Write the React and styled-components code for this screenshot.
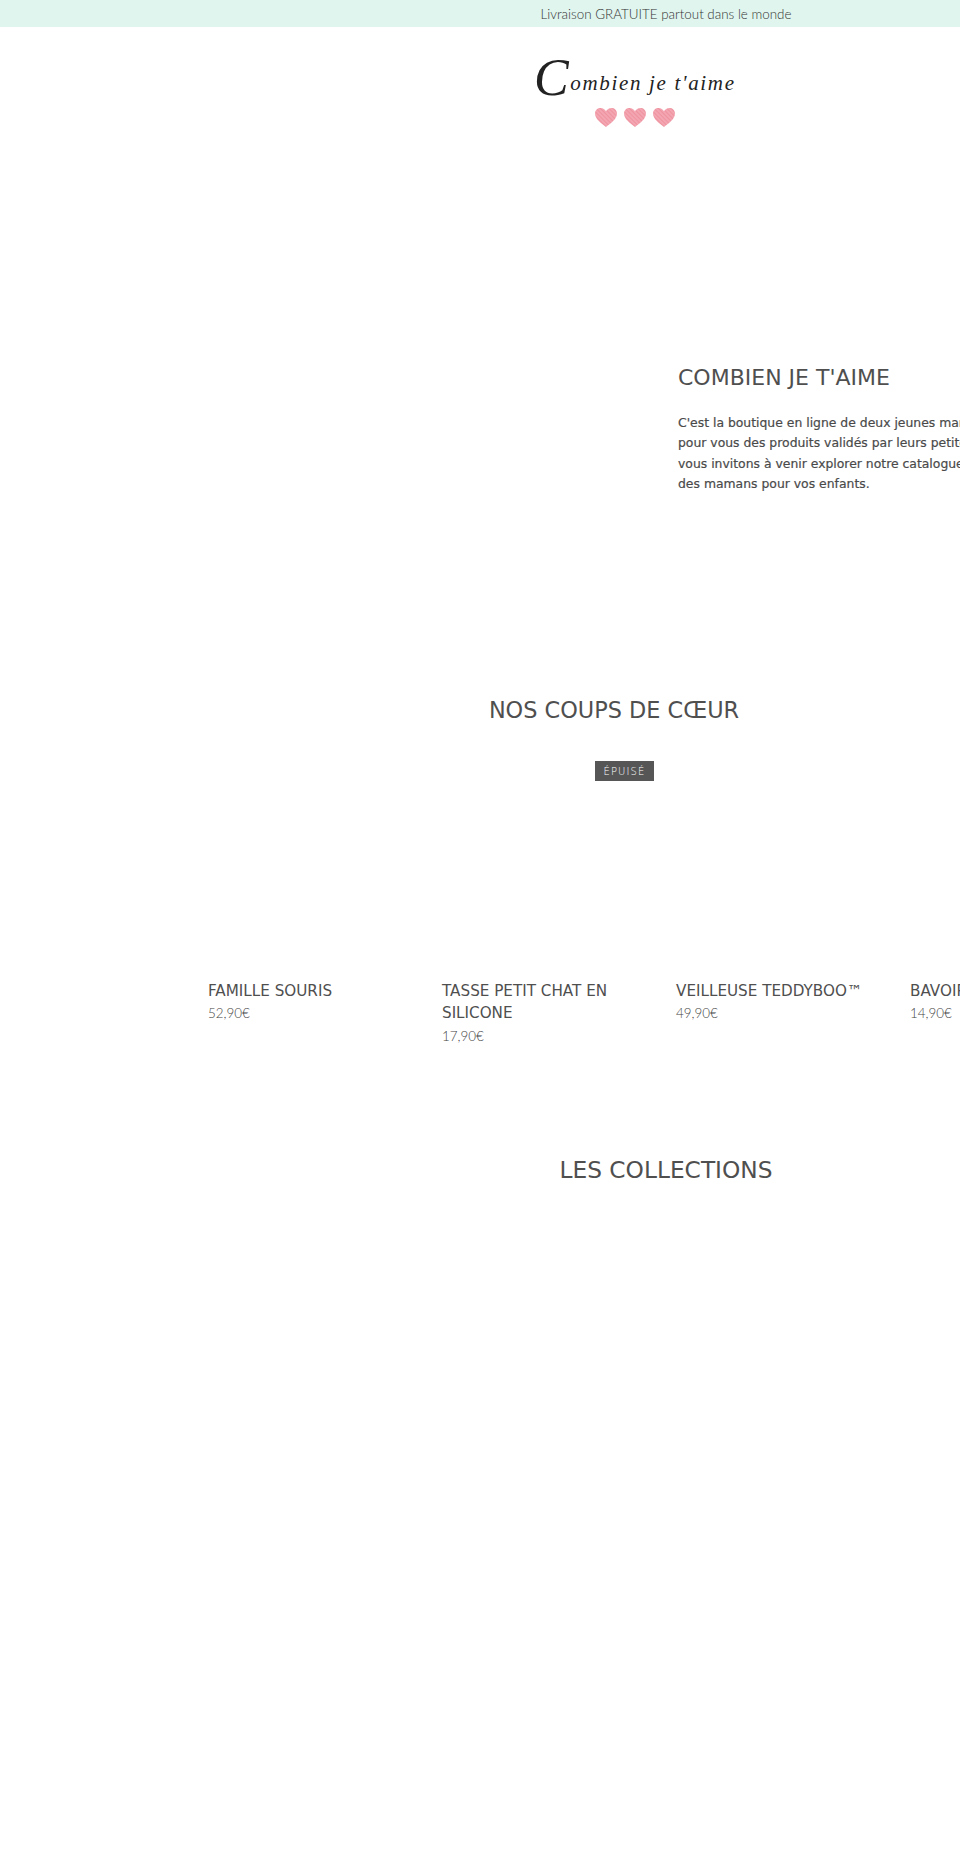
import React from 'react';
import styled, { createGlobalStyle } from 'styled-components';

const GlobalStyle = createGlobalStyle`
  html, body {
    margin: 0;
    width: 960px;
    height: 1875px;
    overflow: hidden;
    background: #fff;
  }
  body {
    font-family: "DejaVu Sans", Verdana, sans-serif;
    color: #4f4f4f;
  }
`;

const Page = styled.div`
  width: 1332px;
  min-height: 1875px;
`;

const AnnouncementBar = styled.div`
  height: 27px;
  background: #dff5ed;
  display: flex;
  align-items: center;
  justify-content: center;
  font-family: Lato, sans-serif;
  font-size: 13.4px;
  font-weight: 300;
  color: #333;
`;

const LogoHeader = styled.header`
  padding: 32px 0 0 534px;
  height: 336px;
  box-sizing: border-box;
`;

const LogoImage = styled.svg`
  display: block;
  width: 204px;
  height: 72px;
`;

const Hero = styled.section`
  padding-left: 678px;
  height: 332px;
`;

const HeroTitle = styled.h2`
  margin: 0 0 21px;
  font-size: 22px;
  line-height: 29px;
  font-weight: 400;
  color: #4f4f4f;
`;

const HeroText = styled.p`
  margin: 0;
  width: 640px;
  font-size: 12.4px;
  line-height: 20.3px;
  font-weight: 400;
  color: #4a4a4a;
  white-space: nowrap;
  -webkit-text-stroke: 0.2px #4a4a4a;
`;

const SectionTitle = styled.h2`
  margin: 0;
  width: ${({ $width }) => $width}px;
  text-align: center;
  font-size: ${({ $size }) => $size}px;
  line-height: 30px;
  font-weight: 400;
  color: #4f4f4f;
`;

const ProductRow = styled.div`
  display: grid;
  grid-template-columns: repeat(4, 212px);
  column-gap: 22px;
  padding: 36px 0 0 208px;
  height: 430px;
  box-sizing: border-box;
`;

const ProductCard = styled.article`
  display: flex;
  flex-direction: column;
`;

const ProductImage = styled.div`
  position: relative;
  height: 219px;
  background: #fff;
`;

const SoldOutBadge = styled.span`
  position: absolute;
  top: 0;
  right: 0;
  width: 59px;
  height: 20px;
  display: flex;
  align-items: center;
  justify-content: center;
  background: #565656;
  color: #fff;
  font-size: 10px;
  font-weight: 200;
  letter-spacing: 1.1px;
`;

const ProductTitle = styled.h3`
  margin: 0;
  font-size: 15.2px;
  line-height: 22.4px;
  font-weight: 400;
  color: #4f4f4f;
`;

const ProductPrice = styled.div`
  font-family: Lato, sans-serif;
  font-size: 13.4px;
  line-height: 22.4px;
  font-weight: 300;
  color: #444;
`;

const products = [
  { name: 'FAMILLE SOURIS', price: '52,90€' },
  { name: 'TASSE PETIT CHAT EN SILICONE', price: '17,90€', soldOut: true },
  { name: 'VEILLEUSE TEDDYBOO™', price: '49,90€' },
  { name: 'BAVOIR EN SILICONE', price: '14,90€' },
];

const HEART = 'M11 19 C6 15 0 11 0 5.5 C0 2 2.6 0 5.5 0 C8 0 10 1.4 11 3.2 C12 1.4 14 0 16.5 0 C19.4 0 22 2 22 5.5 C22 11 16 15 11 19 Z';

function Logo() {
  return (
    <LogoImage viewBox="0 0 204 72" aria-label="Combien je t'aime">
      <defs>
        <pattern id="scribble" width="3" height="3" patternUnits="userSpaceOnUse" patternTransform="rotate(-45)">
          <rect width="3" height="3" fill="#f3a5b1" />
          <rect width="1" height="3" fill="#ee939f" />
        </pattern>
      </defs>
      <text
        x="0"
        y="31"
        fontFamily='"Liberation Serif", serif'
        fontStyle="italic"
        fontSize="21"
        fill="#222"
        textLength="200"
      >
        <tspan fontSize="52" dy="5">C</tspan>
        <tspan dy="-5">ombien je t'aime</tspan>
      </text>
      {[61, 90, 119].map((x) => (
        <path key={x} d={HEART} transform={`translate(${x} 49)`} fill="url(#scribble)" />
      ))}
    </LogoImage>
  );
}

export default function App() {
  return (
    <Page>
      <GlobalStyle />
      <AnnouncementBar>Livraison GRATUITE partout dans le monde</AnnouncementBar>
      <LogoHeader>
        <Logo />
      </LogoHeader>
      <Hero>
        <HeroTitle>COMBIEN JE T'AIME</HeroTitle>
        <HeroText>
          C'est la boutique en ligne de deux jeunes mamans qui ont sélectionné
          <br />
          pour vous des produits validés par leurs petites têtes blondes. Nous
          <br />
          vous invitons à venir explorer notre catalogue, choisi avec amour par
          <br />
          des mamans pour vos enfants.
        </HeroText>
      </Hero>
      <SectionTitle $width={1228} $size={22.4}>NOS COUPS DE CŒUR</SectionTitle>
      <ProductRow>
        {products.map((product) => (
          <ProductCard key={product.name}>
            <ProductImage>
              {product.soldOut && <SoldOutBadge>ÉPUISÉ</SoldOutBadge>}
            </ProductImage>
            <ProductTitle>{product.name}</ProductTitle>
            <ProductPrice>{product.price}</ProductPrice>
          </ProductCard>
        ))}
      </ProductRow>
      <SectionTitle $width={1332} $size={23.3}>LES COLLECTIONS</SectionTitle>
    </Page>
  );
}
